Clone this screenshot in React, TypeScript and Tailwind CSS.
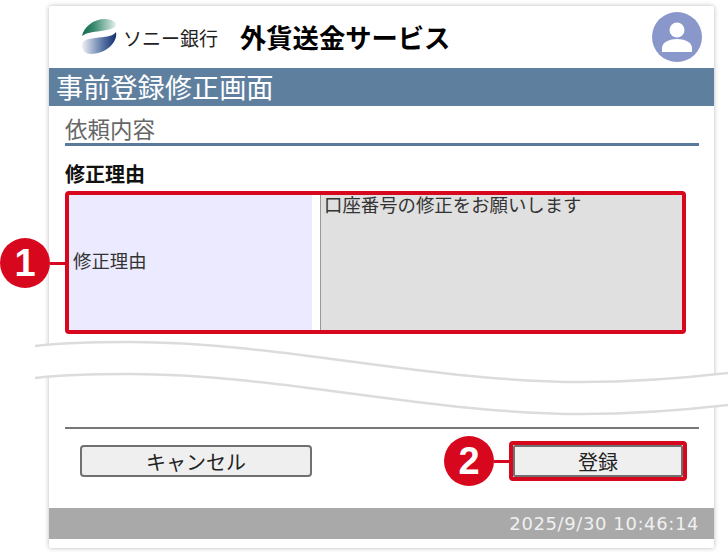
import React from "react";

const jp = "font-['Noto_Sans_CJK_JP','Noto_Sans',sans-serif]";

// Sony Bank mark
function BankLogo() {
    return (
        <svg width="36" height="36" viewBox="0 0 36 36" className="shrink-0">
            <defs>
                <linearGradient id="logoTop" x1="0" y1="0" x2="1" y2="0">
                    <stop offset="0" stopColor="#0b6b4b" />
                    <stop offset="0.35" stopColor="#3a8a70" />
                    <stop offset="1" stopColor="#e6f0ec" />
                </linearGradient>
                <linearGradient id="logoBottom" x1="0" y1="0" x2="1" y2="0">
                    <stop offset="0" stopColor="#eef1f6" />
                    <stop offset="0.6" stopColor="#5a76a6" />
                    <stop offset="1" stopColor="#12306f" />
                </linearGradient>
            </defs>
            <path d="M1 17C3 8 12 0 24 0C31 0 35 3 35 6C35 9 28 11 20 12C11 13 5 14 1 17Z" fill="url(#logoTop)" />
            <path d="M1 26C1 22 5 20 14 19C24 18 33 17 35 13C37 24 24 35 10 35C5 35 1 32 1 26Z" fill="url(#logoBottom)" />
        </svg>
    );
}

function UserAvatar() {
    return (
        <svg width="50" height="50" viewBox="0 0 50 50" className="shrink-0">
            <circle cx="25" cy="25" r="25" fill="#8a97cb" />
            <circle cx="25" cy="18" r="7.5" fill="#fff" />
            <path d="M10 40V36C10 30 18 27 25 27C32 27 40 30 40 36V40Z" fill="#fff" />
        </svg>
    );
}

function NumberBadge({ n, className }: { n: number; className: string }) {
    return (
        <div className={`absolute flex items-center ${className}`}>
            <span className="flex h-[50px] w-[50px] items-center justify-center rounded-full bg-[#d7071e] font-['Liberation_Sans',sans-serif] text-[38px] font-bold text-white">
                {n}
            </span>
            <span className="h-[3px] w-[16px] bg-[#d7071e]" />
        </div>
    );
}

// torn-page gap between the two wavy lines
function WaveBreak() {
    return (
        <svg width="693" height="76" viewBox="35 340 693 76" className="absolute left-[35px] top-[340px]">
            <path
                d="M35 346C60 343 95 342 130 342C280 342 430 382 581 382C635 382 685 378 728 373V405C685 410 635 414 581 414C430 414 280 374 130 374C95 374 60 375 35 378Z"
                fill="#fff"
            />
            <path d="M35 346C60 343 95 342 130 342C280 342 430 382 581 382C635 382 685 378 728 373" fill="none" stroke="#dcdcdc" strokeWidth="2.5" />
            <path d="M35 378C60 375 95 374 130 374C280 374 430 414 581 414C635 414 685 410 728 405" fill="none" stroke="#dcdcdc" strokeWidth="2.5" />
        </svg>
    );
}

export default function App() {
    return (
        <div lang="ja" className={`relative h-[555px] w-[728px] overflow-hidden bg-white pl-[49px] pt-[6px] ${jp}`}>
            <div className="flex h-[542px] w-[665px] flex-col rounded-[2px] bg-white shadow-[0_0_5px_rgba(0,0,0,0.28)]">
                {/* Header */}
                <div className="flex h-[62px] items-center pl-[32px] pr-[12px]">
                    <BankLogo />
                    <span className="ml-[6px] text-[19px] leading-none text-[#222]">ソニー銀行</span>
                    <span className="ml-[22px] text-[26.3px] font-bold leading-none text-black">外貨送金サービス</span>
                    <span className="ml-auto">
                        <UserAvatar />
                    </span>
                </div>

                {/* Title band */}
                <div className="flex h-[38px] items-center bg-[#5f7f9f] pb-[1px] pl-[7px] text-[27.2px] leading-none text-white">
                    事前登録修正画面
                </div>

                {/* Section */}
                <div className="flex flex-col pl-[16px] pr-[15px]">
                    <div className="mt-[11px] h-[29px] border-b-[3px] border-[#5a7a9c] text-[22.5px] leading-[23px] text-[#666]">
                        依頼内容
                    </div>
                    <div className="mt-[15px] text-[20px] font-bold leading-[26px] text-[#111]">修正理由</div>
                    <div className="mt-[4px] flex h-[143px] w-[621px] rounded-[4px] border-4 border-[#d7071e]">
                        <div className="flex w-[243px] items-center bg-[#eceaff] pb-[4px] pl-[4px] text-[18.4px] text-[#333]">修正理由</div>
                        <div className="w-[8px] bg-white" />
                        <div className="flex-1 border-l border-[#999] bg-[#e0e0e0] pl-[3px] text-[18.4px] leading-[19px] text-[#333]">
                            口座番号の修正をお願いします
                        </div>
                    </div>
                </div>

                <div className="mx-[16px] mt-[93px] h-[2px] w-[634px] bg-[#777]" />

                {/* Buttons */}
                <div className="mt-[12px] flex items-center justify-between pl-[31px] pr-[27px]">
                    <button className="h-[32px] w-[232px] rounded-[4px] border-2 border-[#707070] bg-[#efefef] pt-[1px] text-[20px] leading-none text-[#222]">
                        キャンセル
                    </button>
                    <div className="rounded-[4px] border-4 border-[#d7071e]">
                        <button className="block h-[32px] w-[170px] rounded-[2px] border-2 border-[#707070] bg-[#efefef] pt-[1px] text-[20px] leading-none text-[#222]">
                            登録
                        </button>
                    </div>
                </div>

                {/* Footer */}
                <div className="mt-[27px] flex h-[31px] items-center justify-end bg-[#a9a9a9] pr-[15px] font-['DejaVu_Sans',sans-serif] text-[18px] leading-none tracking-[0.6px] text-[#f0f0f0]">
                    2025/9/30 10:46:14
                </div>
            </div>

            <WaveBreak />
            <NumberBadge n={1} className="left-0 top-[238px]" />
            <NumberBadge n={2} className="left-[444px] top-[436px]" />
        </div>
    );
}
